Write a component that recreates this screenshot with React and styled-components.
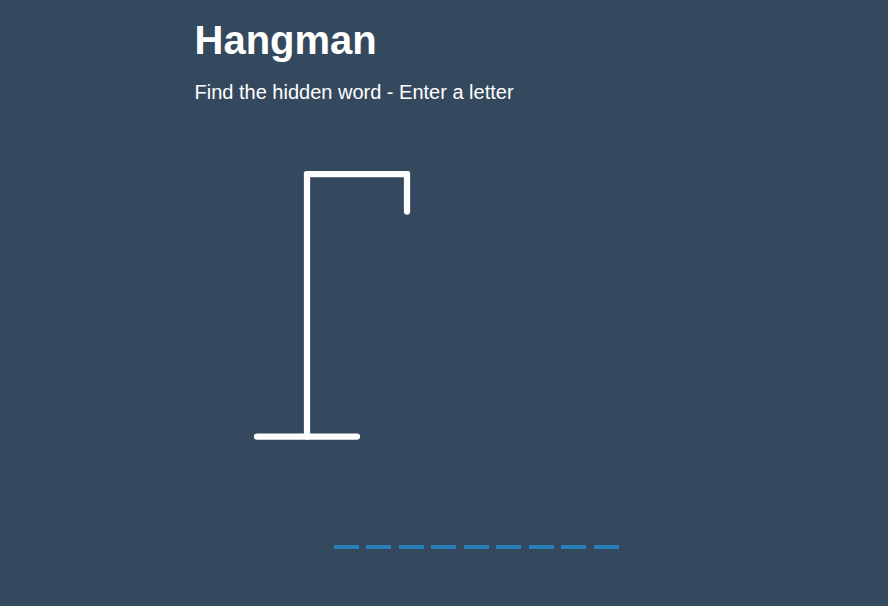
import React from "react";
import styled, { createGlobalStyle } from "styled-components";

const GlobalStyle = createGlobalStyle`
  html, body {
    margin: 0;
    padding: 0;
    background-color: #34495e;
    color: #fff;
    font-family: "Liberation Sans", Arial, sans-serif;
    overflow: hidden;
  }
`;

const Page = styled.div`
  width: 499px;
  margin: 0 auto;
  height: 606px;
`;

const Title = styled.h1`
  font-size: 40px;
  font-weight: bold;
  margin: 18px 0 0;
`;

const Subtitle = styled.p`
  font-size: 20px;
  margin: 18px 0 0;
`;

const GameContainer = styled.div`
  display: flex;
  flex-direction: column;
  padding: 0 37.5px;
  margin-top: 45px;
`;

const Figure = styled.svg`
  display: block;
  fill: transparent;
  stroke: #fff;
  stroke-width: 5px;
  stroke-linecap: round;
`;

const Word = styled.div`
  display: flex;
  gap: 7.5px;
  margin: 83.5px 0 0 101.7px;
`;

const Letter = styled.span`
  display: block;
  width: 25px;
  height: 3.75px;
  background: #2980b9;
`;

const hidden = "wizardry!".split("");

export default function App() {
  return (
    <>
      <GlobalStyle />
      <Page>
        <Title>Hangman</Title>
        <Subtitle>Find the hidden word - Enter a letter</Subtitle>
        <GameContainer>
          <Figure width="250" height="312.5" viewBox="0 0 200 250">
            <line x1="60" y1="20" x2="140" y2="20" />
            <line x1="140" y1="20" x2="140" y2="50" />
            <line x1="60" y1="20" x2="60" y2="230" />
            <line x1="20" y1="230" x2="100" y2="230" />
          </Figure>
          <Word>
            {hidden.map((_, i) => (
              <Letter key={i} />
            ))}
          </Word>
        </GameContainer>
      </Page>
    </>
  );
}
